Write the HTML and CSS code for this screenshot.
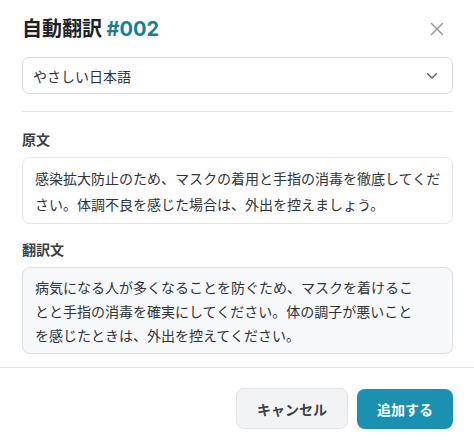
FILE: index.html
```html
<!DOCTYPE html>
<html lang="ja">
<head>
<meta charset="utf-8">
<title>自動翻訳 #002</title>
<link rel="stylesheet" href="styles.css">
</head>
<body>
<div class="dialog">
  <div class="body">
    <header class="head">
      <h1 class="title">自動翻訳 <span class="num">#002</span></h1>
      <button class="close" aria-label="閉じる">
        <svg width="14" height="14" viewBox="0 0 14 14"><path d="M1.5 1.5 L12.5 12.5 M12.5 1.5 L1.5 12.5" stroke="#8f949c" stroke-width="1.4" fill="none" stroke-linecap="round"/></svg>
      </button>
    </header>
    <div class="select">
      <span>やさしい日本語</span>
      <svg class="chev" width="12" height="8" viewBox="0 0 12 8"><path d="M1.5 1.8 L6 6 L10.5 1.8" stroke="#5f6670" stroke-width="1.5" fill="none" stroke-linecap="round" stroke-linejoin="round"/></svg>
    </div>
    <div class="divider"></div>
    <div class="label">原文</div>
    <div class="box src">感染拡大防止のため、マスクの着用と手指の消毒を徹底してくだ<br>さい。体調不良を感じた場合は、外出を控えましょう。</div>
    <div class="label second">翻訳文</div>
    <div class="box out">病気になる人が多くなることを防ぐため、マスクを着けるこ<br>とと手指の消毒を確実にしてください。体の調子が悪いこと<br>を感じたときは、外出を控えてください。</div>
  </div>
  <footer class="foot">
    <button class="btn cancel">キャンセル</button>
    <button class="btn primary">追加する</button>
  </footer>
</div>
</body>
</html>
```
FILE: styles.css
```css
* { box-sizing: border-box; }
html, body { margin: 0; padding: 0; background: #fff; }
body {
  font-family: "Noto Sans CJK JP", "Noto Sans", sans-serif;
  color: #2b2f36;
  width: 474px;
  height: 442px;
  overflow: hidden;
}
.body { padding: 14px 21px 0 22px; }
.head {
  display: flex;
  align-items: center;
  justify-content: space-between;
  height: 28px;
}
.title {
  margin: 0;
  font-size: 20px;
  line-height: 28px;
  font-weight: 700;
  color: #1d2127;
}
.num { color: #187d96; font-family: "Inter", "Noto Sans", sans-serif; font-weight: 700; }
.close {
  border: 0;
  background: none;
  padding: 0;
  width: 14px;
  height: 14px;
  margin-right: 9px;
  margin-top: 2px;
  display: flex;
}
.select {
  margin-top: 15px;
  height: 37px;
  border: 1px solid #d6d9de;
  border-radius: 7px;
  display: flex;
  align-items: center;
  justify-content: space-between;
  padding: 0 14px 0 10px;
  font-size: 14px;
  color: #30343a;
}
.chev { margin-top: 1px; }
.divider { margin-top: 17px; height: 1px; background: #e3e5e8; }
.label {
  margin-top: 17px;
  font-size: 14px;
  line-height: 20px;
  font-weight: 700;
  color: #3a3f47;
}
.label.second { margin-top: 15px; }
.box {
  margin-top: 8px;
  border: 1px solid #e4e6ea;
  border-radius: 8px;
  padding: 7px 8px 6px 12px;
  font-size: 14px;
  color: #2f333a;
  white-space: nowrap;
}
.src { background: #fff; line-height: 26px; }
.out { background: #f7f8fa; border-color: #dcdfe4; line-height: 24px; }
.foot {
  margin-top: 13px;
  border-top: 1px solid #e3e5e8;
  display: flex;
  justify-content: flex-end;
  align-items: center;
  gap: 9px;
  padding: 20px 21px 0 0;
}
.btn {
  font-family: "Noto Sans CJK JP", "Noto Sans", sans-serif;
  font-size: 14px;
  font-weight: 700;
  border-radius: 8px;
  padding: 0 20px;
  cursor: pointer;
}
.cancel {
  height: 41px;
  background: #f2f3f5;
  border: 1px solid #e1e3e7;
  color: #3c414a;
}
.primary {
  height: 40px;
  background: #1a91b0;
  border: 0;
  color: #fff;
}
```
